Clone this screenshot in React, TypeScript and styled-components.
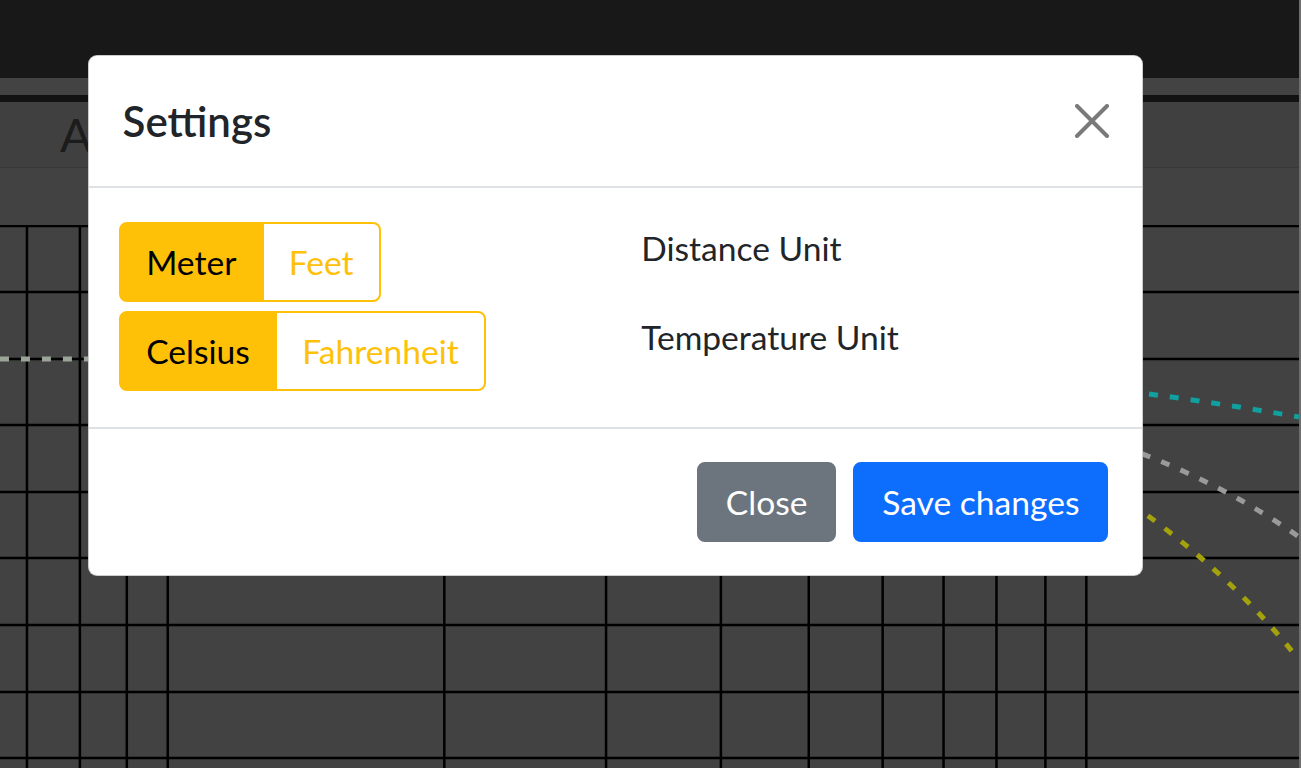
import React, {useState} from 'react'
import styled, {createGlobalStyle} from 'styled-components'

const GlobalStyle = createGlobalStyle`
  html, body {
    margin: 0;
    padding: 0;
    background: #404040;
  }
  * {
    box-sizing: border-box;
  }
`

const FONT = `"Lato", "Open Sans", "Liberation Sans", sans-serif`

const Page = styled.div`
  position: relative;
  width: 1301px;
  height: 768px;
  overflow: hidden;
  display: flex;
  flex-direction: column;
  font-family: ${FONT};
  border-right: 2px solid #6e6e6e;
`

const TopBar = styled.div`
  height: 78px;
  background: #181818;
`

const Band = styled.div<{ h: number; bg: string }>`
  height: ${({h}) => h}px;
  background: ${({bg}) => bg};
`

const TabRow = styled.div`
  height: 66px;
  display: flex;
  align-items: center;
  padding-left: 60px;
  background: #404040;
  border-bottom: 1px solid #383838;
`

const TabLabel = styled.span`
  font-size: 47px;
  line-height: 1;
  color: #1c1c1c;
`

const Chart = styled.svg`
  display: block;
  flex: 1;
  width: 100%;
  background: #424242;
`

// modal

const Backdrop = styled.div`
  position: absolute;
  inset: 0;
  padding: 55px 0 0 88px;
`

const Dialog = styled.div`
  width: 1055px;
  background: #fff;
  border: 1px solid rgba(0, 0, 0, 0.2);
  border-radius: 9px;
  color: #212529;
  font-size: 33.6px;
  line-height: 1.5;
`

const Header = styled.div`
  height: 132px;
  display: flex;
  align-items: center;
  justify-content: space-between;
  padding: 0 33px 0 33.6px;
  border-bottom: 2px solid #dee2e6;
`

const Title = styled.h5`
  margin: 0;
  font-size: 42px;
  font-weight: 600;
  line-height: 1.5;
  color: #212529;
`

const CloseX = styled.button`
  width: 34px;
  height: 34px;
  padding: 0;
  border: 0;
  background: transparent;
  color: #7a7a7a;
  cursor: pointer;
  display: flex;
`

const Body = styled.div`
  height: 239px;
  padding: 34px 33.6px 0 30px;
  display: flex;
  flex-direction: column;
  gap: 9px;
`

const Row = styled.div`
  display: grid;
  grid-template-columns: 1fr 1fr;
  column-gap: 55px;
`

const Group = styled.div`
  display: flex;
  justify-self: start;
`

const ToggleButton = styled.button<{ active?: boolean }>`
  height: 80px;
  font-family: ${FONT};
  font-size: 33.6px;
  line-height: 1.5;
  padding: 0 25.2px;
  border: 2px solid #ffc107;
  background: ${({active}) => (active ? '#ffc107' : '#fff')};
  color: ${({active}) => (active ? '#000' : '#ffc107')};
  cursor: pointer;

  &:first-child {
    border-radius: 8px 0 0 8px;
  }
  &:last-child {
    border-radius: 0 8px 8px 0;
    margin-left: -2px;
  }
`

const Label = styled.div`
  padding-top: 1px;
  color: #212529;
`

const Footer = styled.div`
  height: 148px;
  display: flex;
  align-items: center;
  justify-content: flex-end;
  padding: 0 25.2px 0 0;
  border-top: 2px solid #dee2e6;
`

const ActionButton = styled.button<{ variant: 'secondary' | 'primary' }>`
  height: 80px;
  margin: 0 8.4px;
  font-family: ${FONT};
  font-size: 33.6px;
  line-height: 1.5;
  padding: 0 27px;
  border: 2px solid ${({variant}) => (variant === 'primary' ? '#0d6efd' : '#6c757d')};
  border-radius: 8px;
  background: ${({variant}) => (variant === 'primary' ? '#0d6efd' : '#6c757d')};
  color: #fff;
  cursor: pointer;
`

const rowLines = [1, 67, 134, 200, 267, 333, 400, 467, 533]
const colLines = [27, 80, 127, 168, 445, 607, 722, 810, 884, 945, 998, 1047, 1088]

const curves = [
  {d: 'M 0 134 L 700 134', color: '#9aa497'},
  {d: 'M 900 145 Q 1100 157 1301 192', color: '#10a0a0'},
  {d: 'M 900 165 Q 1150 205 1301 312', color: '#9a9a9a'},
  {d: 'M 950 175 Q 1180 281 1301 435', color: '#a3a20c'},
]

function Toggle({options, value, onChange}: {
  options: string[]
  value: string
  onChange: (v: string) => void
}) {
  return (
    <Group>
      {options.map(o => (
        <ToggleButton key={o} active={o === value} onClick={() => onChange(o)}>
          {o}
        </ToggleButton>
      ))}
    </Group>
  )
}

export default function App() {
  const [distance, setDistance] = useState('Meter')
  const [temperature, setTemperature] = useState('Celsius')

  return (
    <Page>
      <GlobalStyle/>
      <TopBar/>
      <Band h={17} bg="#434343"/>
      <Band h={7} bg="#121212"/>
      <TabRow>
        <TabLabel>A</TabLabel>
      </TabRow>
      <Band h={57} bg="#424242"/>
      <Chart viewBox="0 0 1301 543" preserveAspectRatio="none">
        {rowLines.map(y => (
          <line key={'r' + y} x1={0} x2={1301} y1={y} y2={y} stroke="#000" strokeWidth={2.5}/>
        ))}
        {colLines.map(x => (
          <line key={'c' + x} x1={x} x2={x} y1={0} y2={543} stroke="#000" strokeWidth={2.5}/>
        ))}
        {curves.map(c => (
          <path key={c.d} d={c.d} fill="none" stroke={c.color} strokeWidth={5} strokeDasharray="9 12"/>
        ))}
      </Chart>

      <Backdrop>
        <Dialog>
          <Header>
            <Title>Settings</Title>
            <CloseX aria-label="Close">
              <svg width="34" height="34" viewBox="0 0 34 34">
                <path d="M2 2 L32 32 M32 2 L2 32" stroke="currentColor" strokeWidth="4" strokeLinecap="round"/>
              </svg>
            </CloseX>
          </Header>
          <Body>
            <Row>
              <Toggle options={['Meter', 'Feet']} value={distance} onChange={setDistance}/>
              <Label>Distance Unit</Label>
            </Row>
            <Row>
              <Toggle options={['Celsius', 'Fahrenheit']} value={temperature} onChange={setTemperature}/>
              <Label>Temperature Unit</Label>
            </Row>
          </Body>
          <Footer>
            <ActionButton variant="secondary">Close</ActionButton>
            <ActionButton variant="primary">Save changes</ActionButton>
          </Footer>
        </Dialog>
      </Backdrop>
    </Page>
  )
}
